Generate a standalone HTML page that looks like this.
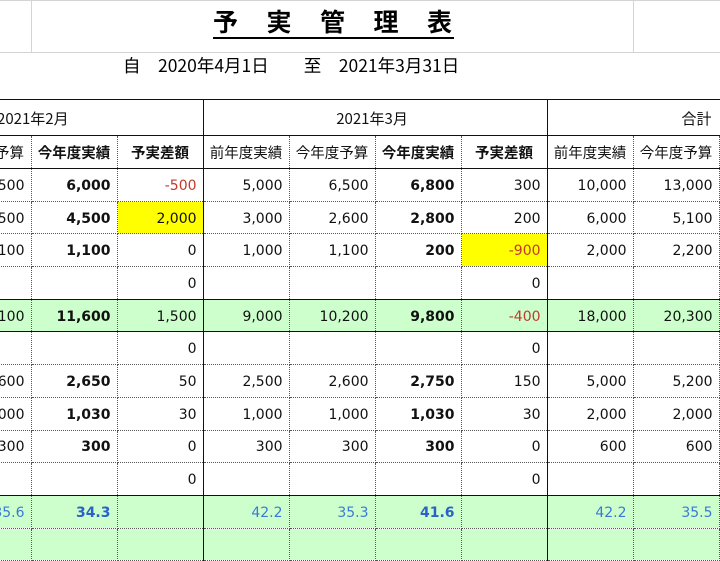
<!DOCTYPE html>
<html><head><meta charset="utf-8"><style>
body{margin:0;width:720px;height:540px;overflow:hidden;background:#fff;position:relative;font-family:"DejaVu Sans","Noto Sans CJK JP",sans-serif;}
.g{position:absolute;background:#d4d4d4}
#title{position:absolute;left:213px;top:6px;width:241px;font:bold 25px "Noto Sans CJK JP",sans-serif;border-bottom:2px solid #000;height:31px;line-height:31px;white-space:nowrap;overflow:visible}
#title span{display:inline-block;width:53.5px}
#date{position:absolute;left:123px;top:53px;font:17.5px "Noto Sans CJK JP",sans-serif;white-space:pre;word-spacing:3px}
table{position:absolute;left:-55px;top:99px;border-collapse:collapse;table-layout:fixed;width:860px}
td{width:86px;padding:0 6px 0 0;text-align:right;font-size:14px;color:#111;border-right:1px dotted #555;border-bottom:1px dotted #555;white-space:nowrap;overflow:hidden;box-sizing:border-box;height:32.7px;padding-top:2px}
tr.h1 td{height:36px;border-bottom:1.5px solid #111;text-align:left;font:15px "Noto Sans CJK JP",sans-serif;padding-left:6px}
tr.h2 td{height:33px;border-bottom:1.5px solid #111;text-align:center;font:14.5px "Noto Sans CJK JP",sans-serif;padding:0}
tr.top td{border-top:1.5px solid #111}
td.s{border-right:1.5px solid #111}
td.b,tr.h2 td.b{font-weight:bold}
tr.gr td{background:#ccffcc;border-bottom:1.5px solid #111}
tr.gr2 td{background:#ccffcc;color:#3c78d8}
tr.gr2 td.b{color:#2a62c9}
tr.pre td{border-bottom:1.5px solid #111}
.y{background:#ffff00}
.r{color:#c0392b}
</style></head><body>
<div class="g" style="left:31px;top:0;width:1px;height:52px"></div>
<div class="g" style="left:633px;top:0;width:1px;height:52px"></div>
<div class="g" style="left:0;top:0;width:720px;height:1px"></div>
<div class="g" style="left:0;top:52px;width:720px;height:1px"></div>
<div id="title"><span>予</span><span>実</span><span>管</span><span>理</span><span>表</span></div>
<div id="date">自　2020年4月1日　　至　2021年3月31日</div>
<table>
<colgroup><col style="width:86px"><col style="width:86px"><col style="width:86px"><col style="width:86px"><col style="width:86px"><col style="width:86px"><col style="width:86px"><col style="width:86px"><col style="width:86px"><col style="width:86px"></colgroup>
<tr class="h1 top"><td colspan="3" class="s" style="padding-left:52px">2021年2月</td><td colspan="4" class="s" style="text-align:center;padding-left:0">2021年3月</td><td colspan="3" style="padding-left:134px">合計</td></tr>
<tr class="h2"><td>今年度予算</td><td class="b">今年度実績</td><td class="b s">予実差額</td><td>前年度実績</td><td>今年度予算</td><td class="b">今年度実績</td><td class="b s">予実差額</td><td>前年度実績</td><td>今年度予算</td><td></td></tr>
<tr><td>6,500</td><td class="b">6,000</td><td class="s r">-500</td><td>5,000</td><td>6,500</td><td class="b">6,800</td><td class="s">300</td><td>10,000</td><td>13,000</td><td></td></tr>
<tr><td>2,500</td><td class="b">4,500</td><td class="s y">2,000</td><td>3,000</td><td>2,600</td><td class="b">2,800</td><td class="s">200</td><td>6,000</td><td>5,100</td><td></td></tr>
<tr><td>1,100</td><td class="b">1,100</td><td class="s">0</td><td>1,000</td><td>1,100</td><td class="b">200</td><td class="s y r">-900</td><td>2,000</td><td>2,200</td><td></td></tr>
<tr class="pre"><td></td><td></td><td class="s">0</td><td></td><td></td><td></td><td class="s">0</td><td></td><td></td><td></td></tr>
<tr class="gr"><td>10,100</td><td class="b">11,600</td><td class="s">1,500</td><td>9,000</td><td>10,200</td><td class="b">9,800</td><td class="s r">-400</td><td>18,000</td><td>20,300</td><td></td></tr>
<tr><td></td><td></td><td class="s">0</td><td></td><td></td><td></td><td class="s">0</td><td></td><td></td><td></td></tr>
<tr><td>2,600</td><td class="b">2,650</td><td class="s">50</td><td>2,500</td><td>2,600</td><td class="b">2,750</td><td class="s">150</td><td>5,000</td><td>5,200</td><td></td></tr>
<tr><td>1,000</td><td class="b">1,030</td><td class="s">30</td><td>1,000</td><td>1,000</td><td class="b">1,030</td><td class="s">30</td><td>2,000</td><td>2,000</td><td></td></tr>
<tr><td>300</td><td class="b">300</td><td class="s">0</td><td>300</td><td>300</td><td class="b">300</td><td class="s">0</td><td>600</td><td>600</td><td></td></tr>
<tr class="pre"><td></td><td></td><td class="s">0</td><td></td><td></td><td></td><td class="s">0</td><td></td><td></td><td></td></tr>
<tr class="gr2"><td>35.6</td><td class="b">34.3</td><td class="s"></td><td>42.2</td><td>35.3</td><td class="b">41.6</td><td class="s"></td><td>42.2</td><td>35.5</td><td></td></tr>
<tr class="gr2"><td></td><td></td><td class="s"></td><td></td><td></td><td></td><td class="s"></td><td></td><td></td><td></td></tr>
</table>
</body></html>
